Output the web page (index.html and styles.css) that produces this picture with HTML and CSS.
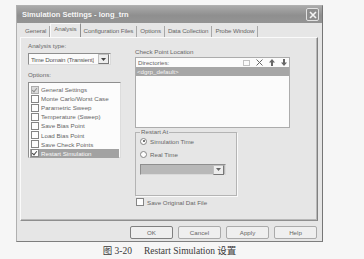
FILE: index.html
```html
<!DOCTYPE html>
<html lang="zh">
  <head>
    <meta charset="UTF-8" />
    <title>Simulation Settings</title>
    <link rel="stylesheet" href="styles.css">
  </head>

  <body>
    <div class="dialog">
      <div class="titlebar">
        <span>Simulation Settings - long_trn</span>
        <span class="close">
          <svg width="8" height="8" viewBox="0 0 8 8"><path d="M1 1L7 7M7 1L1 7" stroke="#f4f4f4" stroke-width="1.6"/></svg>
        </span>
      </div>

      <div class="tabs">
        <span class="tab">General</span>
        <span class="tab selected">Analysis</span>
        <span class="tab">Configuration Files</span>
        <span class="tab">Options</span>
        <span class="tab">Data Collection</span>
        <span class="tab">Probe Window</span>
      </div>

      <div class="panel">
        <div class="left">
          <div class="label first">Analysis type:</div>
          <div class="select">
            <span class="value">Time Domain (Transient)</span>
            <span class="arrow"><svg width="5" height="3" viewBox="0 0 5 3"><path d="M0 0H5L2.5 3Z" fill="#444"/></svg></span>
          </div>
          <div class="label options">Options:</div>
          <ul class="list">
            <li><span class="box checked grey"></span>General Settings</li>
            <li><span class="box"></span>Monte Carlo/Worst Case</li>
            <li><span class="box"></span>Parametric Sweep</li>
            <li><span class="box"></span>Temperature (Sweep)</li>
            <li><span class="box"></span>Save Bias Point</li>
            <li><span class="box"></span>Load Bias Point</li>
            <li><span class="box"></span>Save Check Points</li>
            <li class="active"><span class="box checked"></span>Restart Simulation</li>
          </ul>
        </div>

        <div class="right">
          <div class="label heading">Check Point Location</div>
          <div class="dirbox">
            <div class="dirhead">
              <span>Directories:</span>
              <span class="icons">
                <svg width="7" height="6" viewBox="0 0 7 6"><rect x="0.5" y="0.5" width="6" height="5" fill="none" stroke="#888" stroke-dasharray="1 1"/></svg>
                <svg width="7" height="7" viewBox="0 0 7 7"><path d="M0.5 0.5L6.5 6.5M6.5 0.5L0.5 6.5" stroke="#666" stroke-width="1"/></svg>
                <svg width="6" height="7" viewBox="0 0 6 7"><path d="M3 0L6 3.5H4V7H2V3.5H0Z" fill="#666"/></svg>
                <svg width="6" height="7" viewBox="0 0 6 7"><path d="M3 7L6 3.5H4V0H2V3.5H0Z" fill="#666"/></svg>
              </span>
            </div>
            <div class="dirrow">&lt;dgrp_default&gt;</div>
          </div>

          <fieldset class="restart">
            <legend>Restart At</legend>
            <div class="radiorow"><span class="radio on"></span>Simulation Time</div>
            <div class="radiorow second"><span class="radio"></span>Real Time</div>
            <div class="select disabled">
              <span></span>
              <span class="arrow"><svg width="5" height="3" viewBox="0 0 5 3"><path d="M0 0H5L2.5 3Z" fill="#666"/></svg></span>
            </div>
          </fieldset>

          <div class="saverow"><span class="box"></span>Save Original Dat File</div>
        </div>
      </div>

      <div class="buttons">
        <button class="default">OK</button>
        <button>Cancel</button>
        <button>Apply</button>
        <button>Help</button>
      </div>
    </div>

    <p class="caption"><span class="number">图 3-20</span>Restart Simulation 设置</p>
  </body>
</html>
```

FILE: styles.css
```css
body {
  margin: 0;
  background-color: #f6f6f6;
  font-family: "Liberation Sans", Arial, sans-serif;
  font-size: 6.2px;
  color: #666;
}

.dialog {
  margin: 5px 0 0 16px;
  width: 307px;
  height: 237px;
  box-sizing: border-box;
  background-color: #e6e6e6;
  border: 1px solid #b0b0b0;
  border-right-color: #767676;
  border-bottom-color: #7e7e7e;
  display: flex;
  flex-direction: column;
}

.titlebar {
  height: 17px;
  flex: none;
  display: flex;
  align-items: center;
  justify-content: space-between;
  padding: 0 3px 0 5px;
  background: linear-gradient(#aaaaaa, #8f8f8f 55%, #949494);
  color: #f6f6f6;
  font-weight: bold;
  font-size: 7.5px;
}

.close {
  width: 11px;
  height: 11px;
  border: 1px solid #e2e2e2;
  border-radius: 2px;
  background-color: #8e8e8e;
  display: flex;
  align-items: center;
  justify-content: center;
}

.tabs {
  height: 14px;
  flex: none;
  display: flex;
  align-items: flex-end;
  padding-left: 5px;
  letter-spacing: -0.1px;
}

.tab {
  height: 11px;
  line-height: 10px;
  padding: 0 3px;
  border-right: 1px solid #a8a8a8;
}

.tab.selected {
  height: 13px;
  line-height: 9px;
  border-left: 1px solid #fafafa;
  border-top: 1px solid #fafafa;
  border-right-color: #909090;
  background-color: #e8e8e8;
}

.panel {
  height: 184px;
  flex: none;
  box-sizing: border-box;
  margin: 0 4px 0 3px;
  border: 1px solid #fafafa;
  border-right-color: #808080;
  border-bottom-color: #8e8e8e;
  box-shadow: inset -1px -1px 0 #b8b8b8;
  display: flex;
  gap: 14px;
  padding-left: 7px;
}

.label {
  line-height: 8px;
  height: 8px;
}

.left {
  width: 93px;
}

.label.first {
  margin-top: 4px;
}

.select {
  height: 12px;
  box-sizing: border-box;
  margin-top: 3px;
  border: 1px solid #8e8e8e;
  border-right-color: #dadada;
  border-bottom-color: #dadada;
  background-color: #fbfbfb;
  display: flex;
  align-items: center;
  justify-content: space-between;
  padding-left: 2px;
  color: #555;
}

.value {
  white-space: nowrap;
  overflow: hidden;
  letter-spacing: -0.2px;
}

.left .select {
  width: 83px;
}

.arrow {
  flex: none;
  width: 9px;
  height: 8px;
  margin-right: 1px;
  border: 1px solid #c0c0c0;
  border-right-color: #787878;
  border-bottom-color: #787878;
  background-color: #ededed;
  display: flex;
  align-items: center;
  justify-content: center;
}

.label.options {
  margin-top: 6px;
}

.list {
  list-style: none;
  margin: 3px 0 0;
  padding: 2px 1px 0;
  height: 76px;
  box-sizing: border-box;
  border: 1px solid #8e8e8e;
  border-right-color: #dcdcdc;
  border-bottom-color: #dcdcdc;
  background-color: #fcfcfc;
}

.list li {
  height: 9.1px;
  display: flex;
  align-items: center;
  padding-left: 1px;
}

.list li.active {
  background-color: #a2a2a2;
  color: #fafafa;
}

.box {
  width: 6px;
  height: 6px;
  margin-right: 2px;
  border: 1px solid #858585;
  background-color: #fdfdfd;
  flex: none;
  position: relative;
}

.box.checked::after {
  content: "";
  position: absolute;
  left: 1px;
  top: 0;
  width: 2px;
  height: 4px;
  border: solid #4a4a4a;
  border-width: 0 1px 1px 0;
  transform: rotate(40deg);
}

.box.grey {
  background-color: #dadada;
  border-color: #acacac;
}

.box.grey::after {
  border-color: #909090;
}

.right {
  width: 155px;
}

.label.heading {
  margin-top: 10px;
}

.dirbox {
  margin-top: 1px;
  height: 71px;
  box-sizing: border-box;
  border: 1px solid #acacac;
  background-color: #fbfbfb;
}

.dirhead {
  height: 9px;
  display: flex;
  align-items: center;
  justify-content: space-between;
  padding: 0 2px;
}

.icons {
  display: flex;
  align-items: center;
  gap: 6px;
}

.dirrow {
  height: 9px;
  line-height: 9px;
  padding-left: 1px;
  background-color: #a6a6a6;
  color: #f4f4f4;
}

.restart {
  margin: 0;
  width: 102px;
  height: 68px;
  box-sizing: border-box;
  border: 1px solid #b4b4b4;
  box-shadow: 1px 1px 0 #fafafa;
  padding: 1px 4px 0;
}

.restart legend {
  padding: 0 1px;
  line-height: 8px;
}

.radiorow {
  height: 8px;
  display: flex;
  align-items: center;
}

.radiorow.second {
  margin-top: 5px;
}

.radio {
  width: 5px;
  height: 5px;
  border: 1px solid #858585;
  border-radius: 50%;
  background-color: #fdfdfd;
  margin-right: 3px;
  display: flex;
  align-items: center;
  justify-content: center;
}

.radio.on::after {
  content: "";
  width: 2px;
  height: 2px;
  border-radius: 50%;
  background-color: #4a4a4a;
}

.select.disabled {
  width: 86px;
  height: 11px;
  margin-top: 6px;
  background-color: #b8b8b8;
}

.saverow {
  margin-top: 2px;
  height: 8px;
  display: flex;
  align-items: center;
  padding-left: 1px;
}

.saverow .box {
  margin-right: 3px;
}

.buttons {
  margin-top: 5px;
  display: flex;
  justify-content: flex-end;
  gap: 5px;
  padding-right: 5px;
}

button {
  width: 43px;
  height: 13px;
  padding: 0;
  font-family: inherit;
  font-size: 6.2px;
  color: #666;
  background-color: #efefef;
  border: 1px solid #aaaaaa;
  border-radius: 2px;
}

button.default {
  border-color: #808080;
}

.caption {
  margin: 3px 0 0 16px;
  width: 307px;
  text-align: center;
  font-family: "Liberation Serif", "Noto Sans CJK SC", serif;
  font-size: 9.5px;
  line-height: 12px;
  color: #3a3a3a;
}

.number {
  margin-right: 12px;
}
```
